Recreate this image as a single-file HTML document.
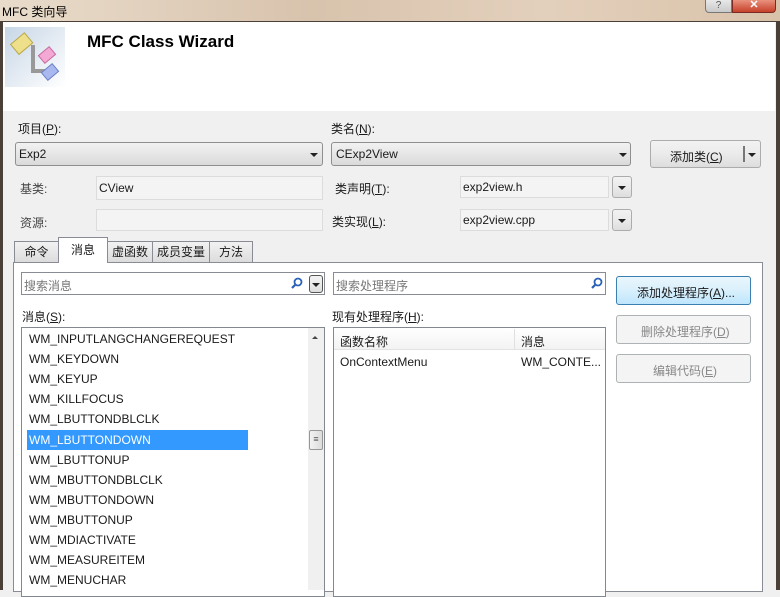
<!DOCTYPE html>
<html><head><meta charset="utf-8"><style>
*{margin:0;padding:0;box-sizing:border-box}
body{width:780px;height:590px;overflow:hidden;background:#f0f0f0;font-family:"Liberation Sans","Noto Sans CJK SC",sans-serif;font-size:12px;color:#1a1a1a;position:relative}
.a{position:absolute;white-space:nowrap}
.box{position:absolute;background:#fff;border:1px solid #abadb3}
.ro{position:absolute;background:#f4f4f4;border:1px solid #dcdcdc}
.combo{position:absolute;border:1px solid #8e8f8f;border-radius:3px;background:linear-gradient(#f2f2f2,#e6e6e6 50%,#dadada)}
.btn{position:absolute;border:1px solid #acacac;border-radius:3px;background:linear-gradient(#f2f2f2,#ebebeb 50%,#dddddd);text-align:center}
.tri{position:absolute;width:0;height:0;border-left:4px solid transparent;border-right:4px solid transparent;border-top:4px solid #222}
.tab{position:absolute;top:241px;height:21px;border:1px solid #898c95;border-bottom:none;background:linear-gradient(#f2f2f2,#dcdcdc);text-align:center;line-height:20px}
u{text-decoration:underline}
.li{position:absolute;left:29px;height:20px;line-height:20px}
</style></head><body>
<div class="a" style="left:0;top:0;width:780px;height:22px;background:linear-gradient(90deg,#e9dccb,#d8c3ad 40%,#e3d0bc 70%,#d9c2aa)"></div>
<div class="a" style="left:2px;top:3px;font-size:12px;color:#000">MFC 类向导</div>
<div class="a" style="left:705px;top:0;width:27px;height:13px;border:1px solid #777;border-top:none;border-radius:0 0 0 4px;background:linear-gradient(#e8e8e8,#c9c9c9);text-align:center;font-size:10px;line-height:11px;color:#555">?</div>
<div class="a" style="left:732px;top:0;width:44px;height:13px;border:1px solid #7a2a20;border-top:none;border-radius:0 0 4px 0;background:linear-gradient(#e8917d,#c7402a);color:#fff;text-align:center;font-size:11px;line-height:11px;font-weight:bold">✕</div>
<div class="a" style="left:0;top:21px;width:780px;height:569px;border-left:3px solid #4b4038;border-right:4px solid #4b4038;border-top:1px solid #4b4038"></div>
<div class="a" style="left:3px;top:22px;width:772px;height:89px;background:#fff"></div>
<svg class="a" style="left:5px;top:27px" width="60" height="60"><defs><linearGradient id="g" x1="0" y1="0" x2="1" y2="1"><stop offset="0" stop-color="#c7d6e6"/><stop offset="1" stop-color="#fff"/></linearGradient></defs><rect width="60" height="60" fill="url(#g)"/><path d="M28 18 V44 H42" stroke="#999" stroke-width="4" fill="none"/><rect x="8" y="10" width="18" height="13" transform="rotate(-40 17 17)" fill="#eee08a" stroke="#b8a84a"/><rect x="35" y="23" width="14" height="10" transform="rotate(-40 42 28)" fill="#f4a8d4" stroke="#c46aa0"/><rect x="38" y="40" width="14" height="10" transform="rotate(-40 45 45)" fill="#a9b9ef" stroke="#6a7fc6"/></svg>
<div class="a" style="left:87px;top:32px;font-size:17px;font-weight:bold;color:#000">MFC Class Wizard</div>

<div class="a" style="left:18px;top:120px">项目(<u>P</u>):</div>
<div class="combo" style="left:15px;top:142px;width:308px;height:24px"><span class="a" style="left:3px;top:4px">Exp2</span><span class="tri" style="left:294px;top:10px"></span></div>
<div class="a" style="left:331px;top:120px">类名(<u>N</u>):</div>
<div class="combo" style="left:331px;top:142px;width:300px;height:24px"><span class="a" style="left:4px;top:4px">CExp2View</span><span class="tri" style="left:287px;top:10px"></span></div>
<div class="btn" style="left:650px;top:140px;width:111px;height:28px"><span class="a" style="left:19px;top:7px">添加类(<u>C</u>)</span><span class="a" style="left:92px;top:5px;width:2px;height:16px;background:#777"></span><span class="tri" style="left:97px;top:12px"></span></div>

<div class="a" style="left:20px;top:180px;color:#444">基类:</div>
<div class="ro" style="left:96px;top:176px;width:227px;height:24px"><span class="a" style="left:2px;top:4px">CView</span></div>
<div class="a" style="left:20px;top:214px;color:#444">资源:</div>
<div class="ro" style="left:96px;top:209px;width:227px;height:22px"></div>
<div class="a" style="left:335px;top:180px">类声明(<u>T</u>):</div>
<div class="ro" style="left:460px;top:176px;width:149px;height:22px"><span class="a" style="left:2px;top:3px">exp2view.h</span></div>
<div class="btn" style="left:612px;top:176px;width:20px;height:22px"><span class="tri" style="left:5px;top:9px"></span></div>
<div class="a" style="left:332px;top:213px">类实现(<u>L</u>):</div>
<div class="ro" style="left:460px;top:209px;width:149px;height:22px"><span class="a" style="left:2px;top:3px">exp2view.cpp</span></div>
<div class="btn" style="left:612px;top:209px;width:20px;height:22px"><span class="tri" style="left:5px;top:9px"></span></div>

<div class="a" style="left:13px;top:262px;width:750px;height:330px;background:#fff;border:1px solid #898c95"></div>
<div class="tab" style="left:14px;width:45px">命令</div>
<div class="tab" style="left:107px;width:46px">虚函数</div>
<div class="tab" style="left:152px;width:58px">成员变量</div>
<div class="tab" style="left:209px;width:44px">方法</div>
<div class="tab" style="left:58px;top:237px;width:50px;height:26px;background:#fff;line-height:24px">消息</div>

<div class="box" style="left:21px;top:272px;width:304px;height:23px;border-color:#898c95"><span class="a" style="left:2px;top:4px;color:#777">搜索消息</span><svg class="a" style="left:269px;top:4px" width="12" height="12"><circle cx="7" cy="5" r="3.5" stroke="#2a62b8" stroke-width="1.8" fill="none"/><path d="M4.5 7.5 L1 11" stroke="#2a62b8" stroke-width="2.2"/></svg></div>
<div class="btn" style="left:309px;top:275px;width:14px;height:18px;border-color:#555"><span class="tri" style="left:2px;top:7px"></span></div>
<div class="box" style="left:333px;top:272px;width:273px;height:23px;border-color:#898c95"><span class="a" style="left:2px;top:4px;color:#777">搜索处理程序</span><svg class="a" style="left:257px;top:4px" width="12" height="12"><circle cx="7" cy="5" r="3.5" stroke="#2a62b8" stroke-width="1.8" fill="none"/><path d="M4.5 7.5 L1 11" stroke="#2a62b8" stroke-width="2.2"/></svg></div>

<div class="btn" style="left:616px;top:276px;width:135px;height:29px;border-color:#3c7fb1;background:linear-gradient(#eaf6fd,#d9f0fc 50%,#bee6fd)"><span class="a" style="left:20px;top:7px">添加处理程序(<u>A</u>)...</span></div>
<div class="btn" style="left:616px;top:315px;width:135px;height:29px;color:#888;background:#f4f4f4;border-color:#adb2b5"><span class="a" style="left:24px;top:7px">删除处理程序(<u>D</u>)</span></div>
<div class="btn" style="left:616px;top:354px;width:135px;height:29px;color:#888;background:#f4f4f4;border-color:#adb2b5"><span class="a" style="left:36px;top:7px">编辑代码(<u>E</u>)</span></div>

<div class="a" style="left:22px;top:308px">消息(<u>S</u>):</div>
<div class="a" style="left:332px;top:308px">现有处理程序(<u>H</u>):</div>

<div class="box" style="left:21px;top:327px;width:304px;height:270px;border-color:#828790"></div>
<div class="a" style="left:308px;top:328px;width:16px;height:262px;background:#f0f0f0"></div>
<div class="a" style="left:312px;top:336px;border-left:3px solid transparent;border-right:3px solid transparent;border-bottom:3px solid #444"></div>
<div class="a" style="left:309px;top:430px;width:14px;height:20px;border:1px solid #979797;border-radius:2px;background:linear-gradient(90deg,#f2f2f2,#dcdcdc);text-align:center;font-size:9px;line-height:17px;color:#555">≡</div>
<div class="a" style="left:27px;top:430px;width:221px;height:20px;background:#3399ff"></div>
<div class="li" style="top:329px">WM_INPUTLANGCHANGEREQUEST</div>
<div class="li" style="top:349px">WM_KEYDOWN</div>
<div class="li" style="top:369px">WM_KEYUP</div>
<div class="li" style="top:389px">WM_KILLFOCUS</div>
<div class="li" style="top:409px">WM_LBUTTONDBLCLK</div>
<div class="li" style="top:430px;color:#fff">WM_LBUTTONDOWN</div>
<div class="li" style="top:450px">WM_LBUTTONUP</div>
<div class="li" style="top:470px">WM_MBUTTONDBLCLK</div>
<div class="li" style="top:490px">WM_MBUTTONDOWN</div>
<div class="li" style="top:510px">WM_MBUTTONUP</div>
<div class="li" style="top:530px">WM_MDIACTIVATE</div>
<div class="li" style="top:550px">WM_MEASUREITEM</div>
<div class="li" style="top:570px">WM_MENUCHAR</div>

<div class="box" style="left:333px;top:327px;width:273px;height:270px;border-color:#828790"></div>
<div class="a" style="left:334px;top:328px;width:271px;height:22px;background:linear-gradient(#fff,#f3f3f3);border-bottom:1px solid #e3e3e3"></div>
<div class="a" style="left:514px;top:329px;width:1px;height:21px;background:#e0e0e0"></div>
<div class="a" style="left:340px;top:333px">函数名称</div>
<div class="a" style="left:521px;top:333px">消息</div>
<div class="a" style="left:340px;top:355px">OnContextMenu</div>
<div class="a" style="left:521px;top:355px">WM_CONTE...</div>
</body></html>
